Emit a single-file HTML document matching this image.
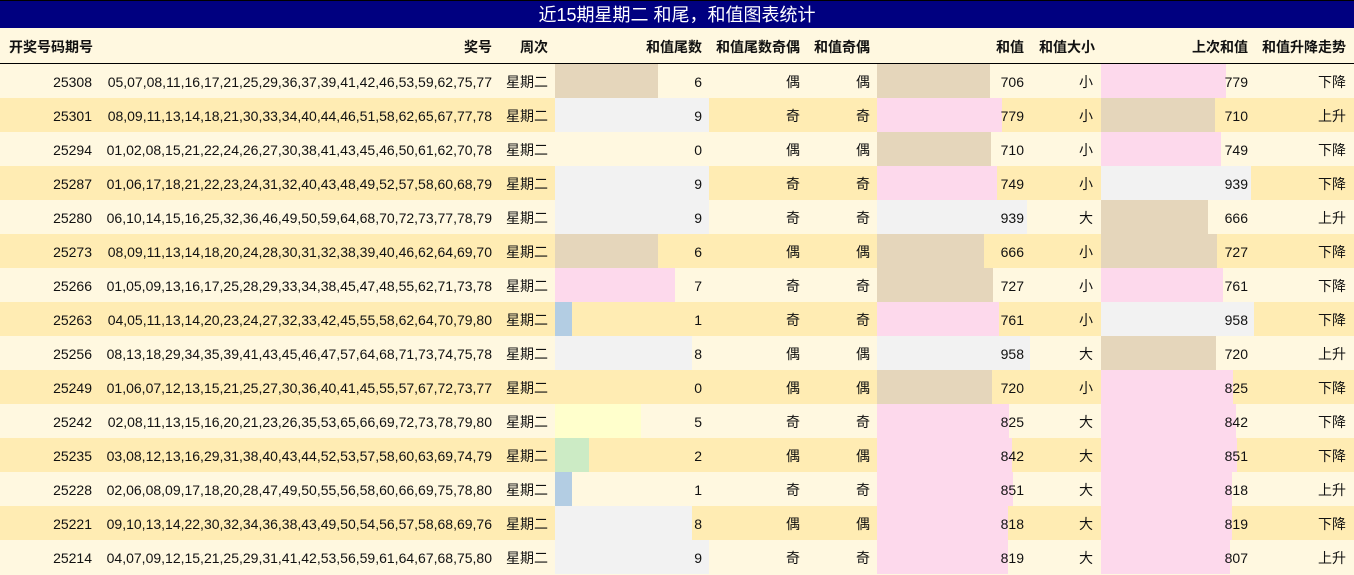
<!DOCTYPE html>
<html><head><meta charset="utf-8">
<style>
*{margin:0;padding:0;box-sizing:border-box}
body{width:1354px;height:575px;background:#fff8e0;font-family:"Liberation Sans","Noto Sans CJK SC",sans-serif;font-size:14px;color:#111;position:relative;overflow:hidden}
#title{position:absolute;left:0;top:0;width:1354px;height:28px;background:#000080;border-top:1px solid #000;color:#fff;font-size:18px;text-align:center;line-height:28px}
#hdr{position:absolute;left:0;top:28px;width:1354px;height:36px;background:#fff8e0;border-bottom:1px solid #000;font-weight:bold}
.r{position:absolute;left:0;width:1354px;height:34px}
.t{position:absolute;top:1px;line-height:34px;white-space:nowrap}
.b{position:absolute;top:0;height:34px}
</style></head><body>
<div id="title">近15期星期二 和尾，和值图表统计</div>
<div id="hdr">
<span class="t" style="left:9px;line-height:36px">开奖号码期号</span>
<span class="t" style="right:862px;line-height:36px">奖号</span>
<span class="t" style="left:520px;line-height:36px">周次</span>
<span class="t" style="right:652px;line-height:36px">和值尾数</span>
<span class="t" style="right:554px;line-height:36px">和值尾数奇偶</span>
<span class="t" style="right:484px;line-height:36px">和值奇偶</span>
<span class="t" style="right:330px;line-height:36px">和值</span>
<span class="t" style="right:259px;line-height:36px">和值大小</span>
<span class="t" style="right:106px;line-height:36px">上次和值</span>
<span class="t" style="right:8px;line-height:36px">和值升降走势</span>
</div>
<div id="rows"></div>
<script>
var T='#e5d6bb',P='#fdd9ec',G='#f2f2f2',B='#b3cde3',Y='#ffffcc',N='#ccebc5';
var d=[
['25308','05,07,08,11,16,17,21,25,29,36,37,39,41,42,46,53,59,62,75,77',6,T,'偶','偶',706,T,'小',779,P,'下降'],
['25301','08,09,11,13,14,18,21,30,33,34,40,44,46,51,58,62,65,67,77,78',9,G,'奇','奇',779,P,'小',710,T,'上升'],
['25294','01,02,08,15,21,22,24,26,27,30,38,41,43,45,46,50,61,62,70,78',0,G,'偶','偶',710,T,'小',749,P,'下降'],
['25287','01,06,17,18,21,22,23,24,31,32,40,43,48,49,52,57,58,60,68,79',9,G,'奇','奇',749,P,'小',939,G,'下降'],
['25280','06,10,14,15,16,25,32,36,46,49,50,59,64,68,70,72,73,77,78,79',9,G,'奇','奇',939,G,'大',666,T,'上升'],
['25273','08,09,11,13,14,18,20,24,28,30,31,32,38,39,40,46,62,64,69,70',6,T,'偶','偶',666,T,'小',727,T,'下降'],
['25266','01,05,09,13,16,17,25,28,29,33,34,38,45,47,48,55,62,71,73,78',7,P,'奇','奇',727,T,'小',761,P,'下降'],
['25263','04,05,11,13,14,20,23,24,27,32,33,42,45,55,58,62,64,70,79,80',1,B,'奇','奇',761,P,'小',958,G,'下降'],
['25256','08,13,18,29,34,35,39,41,43,45,46,47,57,64,68,71,73,74,75,78',8,G,'偶','偶',958,G,'大',720,T,'上升'],
['25249','01,06,07,12,13,15,21,25,27,30,36,40,41,45,55,57,67,72,73,77',0,G,'偶','偶',720,T,'小',825,P,'下降'],
['25242','02,08,11,13,15,16,20,21,23,26,35,53,65,66,69,72,73,78,79,80',5,Y,'奇','奇',825,P,'大',842,P,'下降'],
['25235','03,08,12,13,16,29,31,38,40,43,44,52,53,57,58,60,63,69,74,79',2,N,'偶','偶',842,P,'大',851,P,'下降'],
['25228','02,06,08,09,17,18,20,28,47,49,50,55,56,58,60,66,69,75,78,80',1,B,'奇','奇',851,P,'大',818,P,'上升'],
['25221','09,10,13,14,22,30,32,34,36,38,43,49,50,54,56,57,58,68,69,76',8,G,'偶','偶',818,P,'大',819,P,'下降'],
['25214','04,07,09,12,15,21,25,29,31,41,42,53,56,59,61,64,67,68,75,80',9,G,'奇','奇',819,P,'大',807,P,'上升']];
var h='';
d.forEach(function(r,i){
 var bg=i%2?'#ffecb3':'#fff8e0';
 h+='<div class="r" style="top:'+(64+i*34)+'px;background:'+bg+'">';
 h+='<div class="b" style="left:555px;width:'+Math.round(r[2]*154/9)+'px;background:'+r[3]+'"></div>';
 h+='<div class="b" style="left:877px;width:'+Math.round(r[6]*0.16)+'px;background:'+r[7]+'"></div>';
 h+='<div class="b" style="left:1101px;width:'+Math.round(r[9]*0.16)+'px;background:'+r[10]+'"></div>';
 h+='<span class="t" style="right:1262px">'+r[0]+'</span>';
 h+='<span class="t" style="right:862px">'+r[1]+'</span>';
 h+='<span class="t" style="left:506px">星期二</span>';
 h+='<span class="t" style="right:652px">'+r[2]+'</span>';
 h+='<span class="t" style="right:554px">'+r[4]+'</span>';
 h+='<span class="t" style="right:484px">'+r[5]+'</span>';
 h+='<span class="t" style="right:330px">'+r[6]+'</span>';
 h+='<span class="t" style="right:261px">'+r[8]+'</span>';
 h+='<span class="t" style="right:106px">'+r[9]+'</span>';
 h+='<span class="t" style="right:8px">'+r[11]+'</span>';
 h+='</div>';
});
document.getElementById('rows').innerHTML=h;
</script>
</body></html>
